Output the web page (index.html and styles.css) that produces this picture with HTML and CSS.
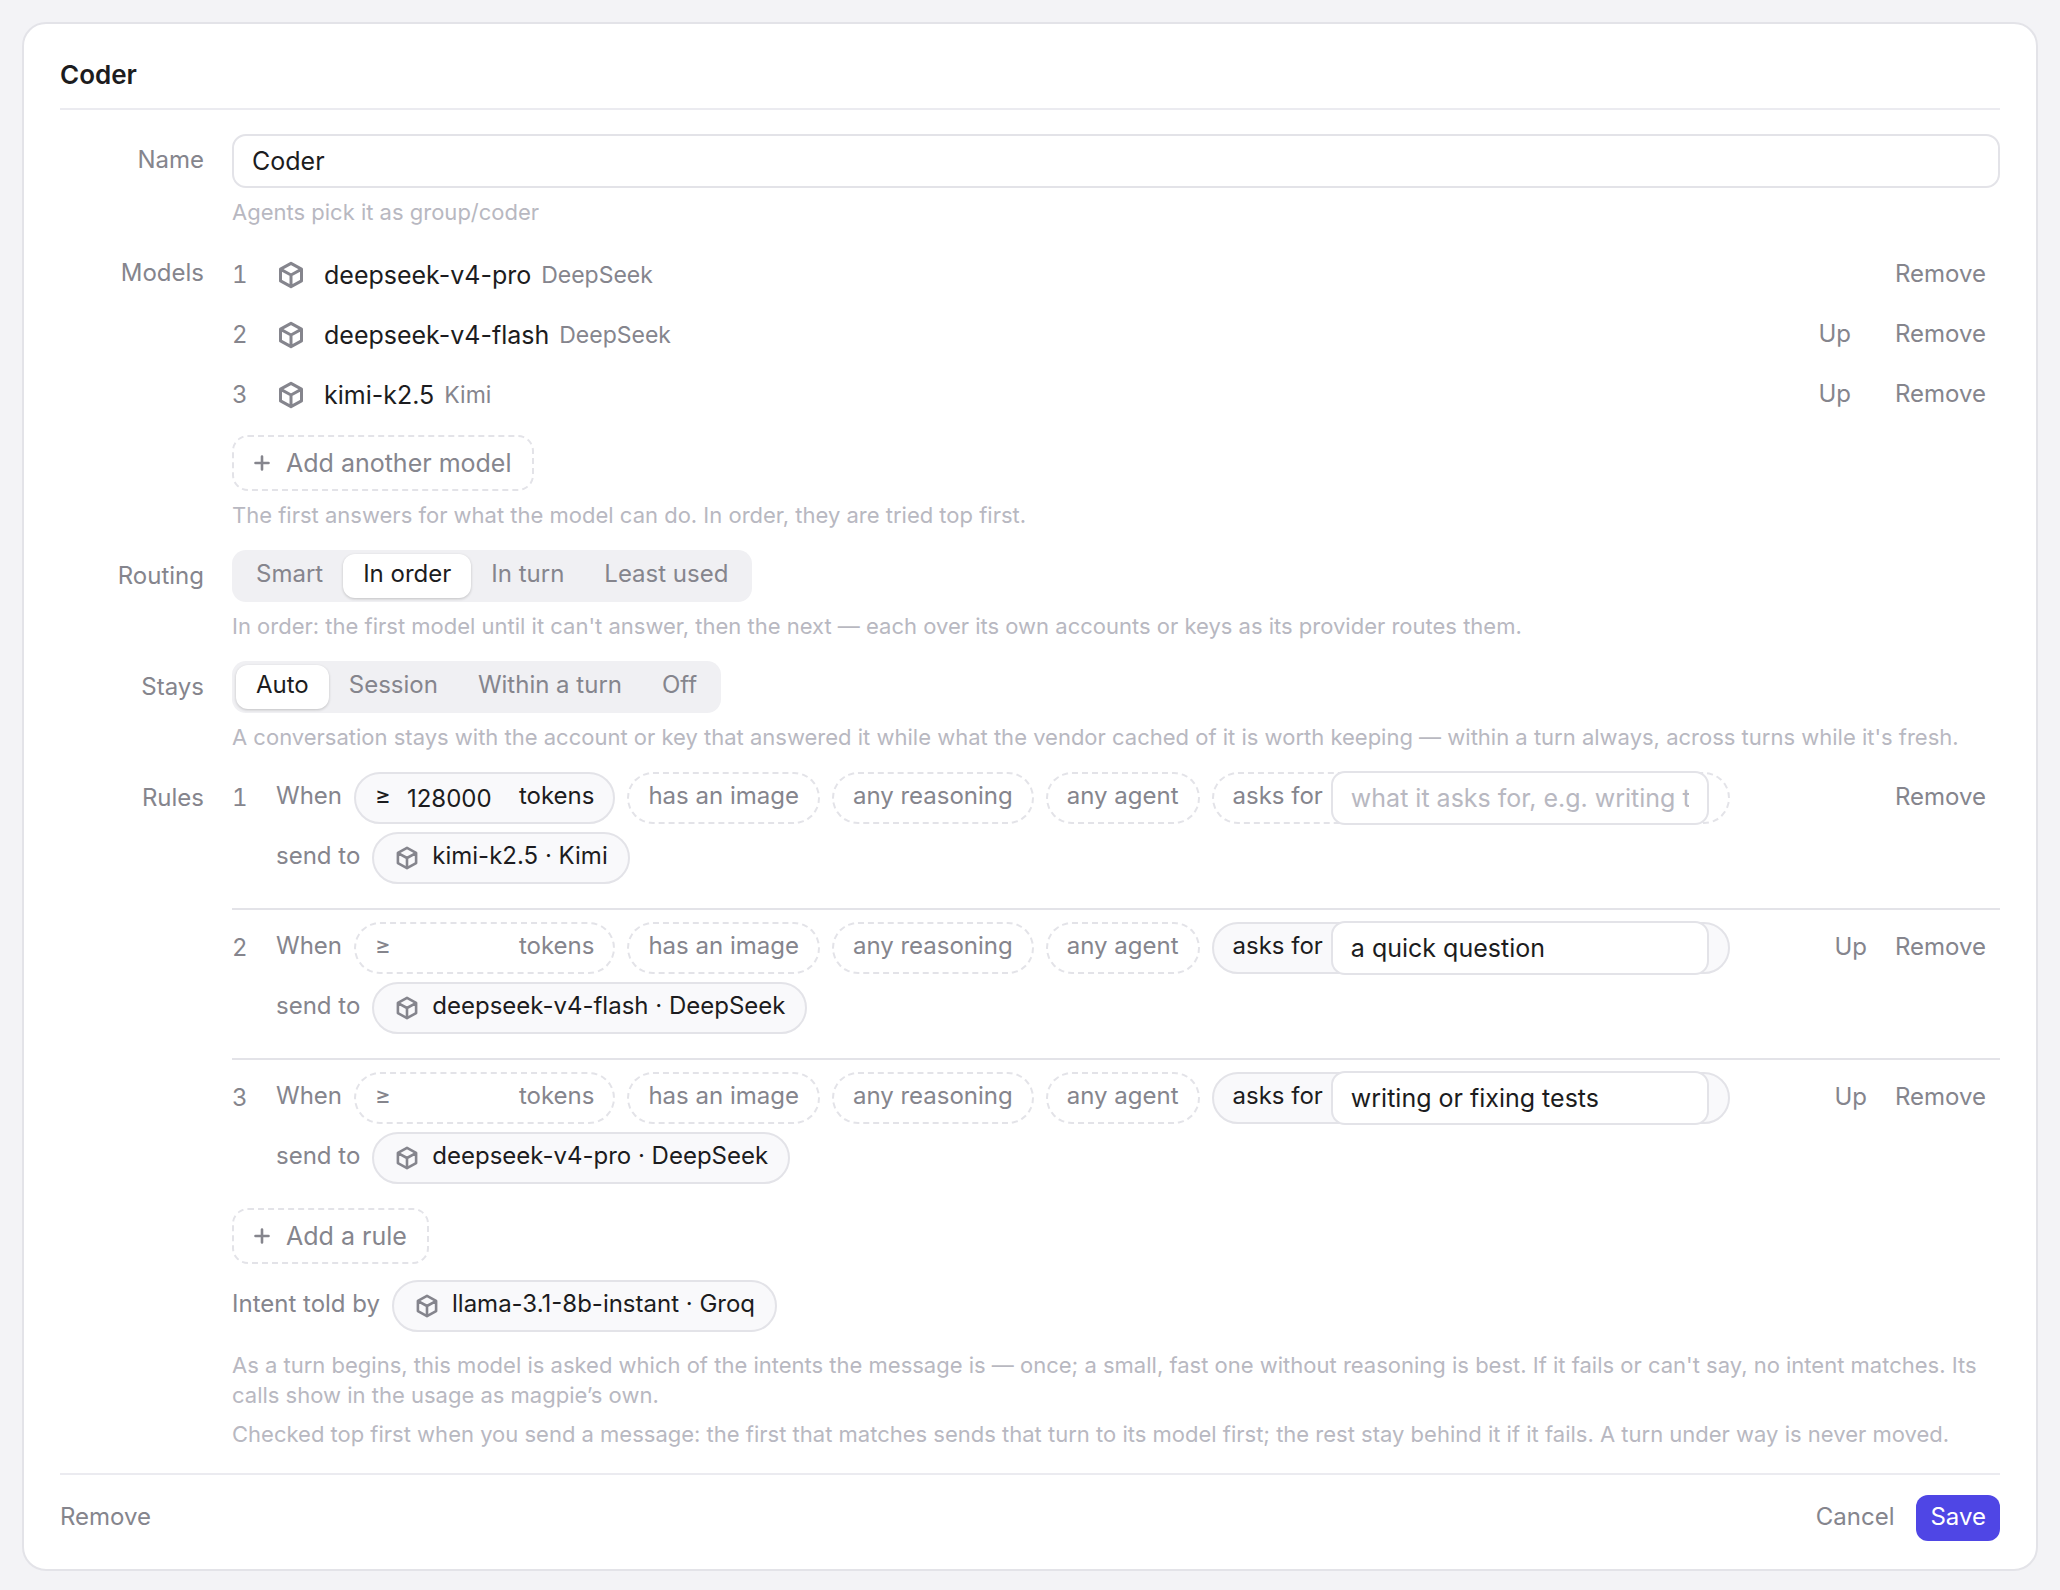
FILE: index.html
```html
<!DOCTYPE html>
<html lang="en">
<head>
  <meta charset="UTF-8" />
  <meta name="viewport" content="width=device-width, initial-scale=1.0"/>
  <title>Coder</title>
  <link rel="stylesheet" href="styles.css">
</head>
<body>
  <!-- shared icons -->
  <svg class="sprite" aria-hidden="true">
    <symbol id="cube" viewBox="0 0 24 24">
      <path d="M12 2.7 20.4 7.3V16.7L12 21.3 3.6 16.7V7.3ZM3.8 7.5 12 12 20.2 7.5M12 12V21.3" fill="none" stroke="currentColor" stroke-width="2.4" stroke-linejoin="round"/>
    </symbol>
    <symbol id="plus" viewBox="0 0 16 16">
      <path d="M8 1.5V14.5M1.5 8H14.5" fill="none" stroke="currentColor" stroke-width="2.6" stroke-linecap="round"/>
    </symbol>
  </svg>

  <form class="card">
    <h1 class="title">Coder</h1>

    <div class="fields">
      <div class="field">
        <label class="label" for="name">Name</label>
        <div class="content">
          <input class="input" type="text" id="name" value="Coder" />
          <p class="hint">Agents pick it as group/coder</p>
        </div>
      </div>

      <div class="field">
        <span class="label">Models</span>
        <div class="content">
          <ol class="models">
            <li class="model">
              <span class="num">1</span>
              <svg class="icon"><use href="#cube"/></svg>
              <span class="model-name">deepseek-v4-pro</span>
              <span class="provider">DeepSeek</span>
              <div class="actions"><button type="button" class="link">Remove</button></div>
            </li>
            <li class="model">
              <span class="num">2</span>
              <svg class="icon"><use href="#cube"/></svg>
              <span class="model-name">deepseek-v4-flash</span>
              <span class="provider">DeepSeek</span>
              <div class="actions"><button type="button" class="link">Up</button><button type="button" class="link">Remove</button></div>
            </li>
            <li class="model">
              <span class="num">3</span>
              <svg class="icon"><use href="#cube"/></svg>
              <span class="model-name">kimi-k2.5</span>
              <span class="provider">Kimi</span>
              <div class="actions"><button type="button" class="link">Up</button><button type="button" class="link">Remove</button></div>
            </li>
          </ol>
          <button type="button" class="add"><svg class="plus"><use href="#plus"/></svg>Add another model</button>
          <p class="hint">The first answers for what the model can do. In order, they are tried top first.</p>
        </div>
      </div>

      <div class="field">
        <span class="label" id="routing">Routing</span>
        <div class="content">
          <div class="segments" role="radiogroup" aria-labelledby="routing">
            <label class="segment"><input type="radio" name="routing"><span>Smart</span></label>
            <label class="segment"><input type="radio" name="routing" checked><span>In order</span></label>
            <label class="segment"><input type="radio" name="routing"><span>In turn</span></label>
            <label class="segment"><input type="radio" name="routing"><span>Least used</span></label>
          </div>
          <p class="hint">In order: the first model until it can't answer, then the next — each over its own accounts or keys as its provider routes them.</p>
        </div>
      </div>

      <div class="field">
        <span class="label" id="stays">Stays</span>
        <div class="content">
          <div class="segments" role="radiogroup" aria-labelledby="stays">
            <label class="segment"><input type="radio" name="stays" checked><span>Auto</span></label>
            <label class="segment"><input type="radio" name="stays"><span>Session</span></label>
            <label class="segment"><input type="radio" name="stays"><span>Within a turn</span></label>
            <label class="segment"><input type="radio" name="stays"><span>Off</span></label>
          </div>
          <p class="hint">A conversation stays with the account or key that answered it while what the vendor cached of it is worth keeping — within a turn always, across turns while it's fresh.</p>
        </div>
      </div>

      <div class="field">
        <span class="label">Rules</span>
        <div class="content">
          <ol class="rules">
            <li class="rule">
              <span class="num">1</span>
              <div class="rule-body">
                <div class="line">
                  <span class="word">When</span>
                  <label class="chip on"><span>≥</span><input class="count" type="text" value="128000"><span>tokens</span></label>
                  <button type="button" class="chip"><span>has an image</span></button>
                  <button type="button" class="chip"><span>any reasoning</span></button>
                  <button type="button" class="chip"><span>any agent</span></button>
                  <label class="chip"><span>asks for</span><input class="input intent" type="text" placeholder="what it asks for, e.g. writing tests"></label>
                </div>
                <div class="line">
                  <span class="word">send to</span>
                  <button type="button" class="chip on target"><svg class="icon-small"><use href="#cube"/></svg><span>kimi-k2.5 · Kimi</span></button>
                </div>
              </div>
              <div class="actions"><button type="button" class="link">Remove</button></div>
            </li>
            <li class="rule">
              <span class="num">2</span>
              <div class="rule-body">
                <div class="line">
                  <span class="word">When</span>
                  <label class="chip"><span>≥</span><input class="count" type="text"><span>tokens</span></label>
                  <button type="button" class="chip"><span>has an image</span></button>
                  <button type="button" class="chip"><span>any reasoning</span></button>
                  <button type="button" class="chip"><span>any agent</span></button>
                  <label class="chip on"><span>asks for</span><input class="input intent" type="text" value="a quick question"></label>
                </div>
                <div class="line">
                  <span class="word">send to</span>
                  <button type="button" class="chip on target"><svg class="icon-small"><use href="#cube"/></svg><span>deepseek-v4-flash · DeepSeek</span></button>
                </div>
              </div>
              <div class="actions"><button type="button" class="link">Up</button><button type="button" class="link">Remove</button></div>
            </li>
            <li class="rule">
              <span class="num">3</span>
              <div class="rule-body">
                <div class="line">
                  <span class="word">When</span>
                  <label class="chip"><span>≥</span><input class="count" type="text"><span>tokens</span></label>
                  <button type="button" class="chip"><span>has an image</span></button>
                  <button type="button" class="chip"><span>any reasoning</span></button>
                  <button type="button" class="chip"><span>any agent</span></button>
                  <label class="chip on"><span>asks for</span><input class="input intent" type="text" value="writing or fixing tests"></label>
                </div>
                <div class="line">
                  <span class="word">send to</span>
                  <button type="button" class="chip on target"><svg class="icon-small"><use href="#cube"/></svg><span>deepseek-v4-pro · DeepSeek</span></button>
                </div>
              </div>
              <div class="actions"><button type="button" class="link">Up</button><button type="button" class="link">Remove</button></div>
            </li>
          </ol>
          <button type="button" class="add"><svg class="plus"><use href="#plus"/></svg>Add a rule</button>
          <div class="line teller">
            <span class="word">Intent told by</span>
            <button type="button" class="chip on target"><svg class="icon-small"><use href="#cube"/></svg><span>llama-3.1-8b-instant · Groq</span></button>
          </div>
          <p class="hint">As a turn begins, this model is asked which of the intents the message is — once; a small, fast one without reasoning is best. If it fails or can't say, no intent matches. Its calls show in the usage as magpie’s own.</p>
          <p class="hint">Checked top first when you send a message: the first that matches sends that turn to its model first; the rest stay behind it if it fails. A turn under way is never moved.</p>
        </div>
      </div>
    </div>

    <div class="footer">
      <button type="button" class="link delete">Remove</button>
      <button type="button" class="link">Cancel</button>
      <button type="submit" class="save">Save</button>
    </div>
  </form>
</body>
</html>
```

FILE: styles.css
```css
* {
  box-sizing: border-box;
}

body {
  margin: 0;
  padding: 22px;
  background: #f3f3f6;
  color: #1c1c20;
  font-family: Inter, sans-serif;
  font-size: 24px;
  line-height: 28px;
}

button,
input {
  font: inherit;
  color: inherit;
}

button {
  border: none;
  background: none;
  cursor: pointer;
}

p,
ol {
  margin: 0;
  padding: 0;
  list-style: none;
}

.sprite {
  display: none;
}

.card {
  padding: 36px 36px 28px;
  background: #ffffff;
  border: 2px solid #e3e3e8;
  border-radius: 24px;
}

.title {
  margin: 0;
  padding-bottom: 18px;
  border-bottom: 2px solid #ebebf0;
  font-size: 26px;
  line-height: 30px;
  font-weight: 600;
}

.fields {
  display: flex;
  flex-direction: column;
  gap: 20px;
  padding: 24px 0;
}

.field {
  display: grid;
  grid-template-columns: 144px 1fr;
  gap: 28px;
}

.label {
  padding-top: 12px;
  text-align: right;
  color: #85858d;
}

.content {
  min-width: 0;
}

.input {
  display: block;
  width: 100%;
  height: 54px;
  padding: 0 18px;
  background: #ffffff;
  border: 2px solid #e3e3e8;
  border-radius: 14px;
  font-size: 25px;
  color: #1c1c20;
}

.input::placeholder {
  color: #b8b8c1;
}

.hint {
  margin-top: 9px;
  font-size: 22px;
  line-height: 30px;
  color: #b8b8c1;
}

/* models */
.models {
  display: flex;
  flex-direction: column;
  gap: 4px;
  margin-bottom: 12px;
}

.model {
  display: flex;
  align-items: center;
  height: 56px;
}

.num {
  width: 44px;
  color: #85858d;
  font-variant-numeric: tabular-nums;
}

.icon {
  width: 30px;
  height: 30px;
  margin-right: 18px;
  color: #85858d;
}

.model-name {
  margin-right: 10px;
  font-size: 25px;
}

.provider {
  font-size: 23px;
  color: #85858d;
}

.actions {
  display: flex;
  margin-left: auto;
}

.model .actions {
  gap: 16px;
}

.link {
  padding: 0 14px 2px;
  color: #85858d;
}

.add {
  display: flex;
  align-items: center;
  gap: 16px;
  height: 56px;
  padding: 0 20px;
  border: 2px dashed #e3e3e8;
  border-radius: 16px;
  font-size: 25px;
  color: #85858d;
}

.plus {
  width: 16px;
  height: 16px;
}

/* segmented control */
.segments {
  display: inline-flex;
  vertical-align: top;
  padding: 4px;
  background: #f0f0f3;
  border-radius: 14px;
}

.segment {
  position: relative;
  color: #85858d;
  cursor: pointer;
}

.segment input {
  position: absolute;
  margin: 0;
  opacity: 0;
}

.segment span {
  display: block;
  padding: 6px 20px 10px;
  border-radius: 12px;
}

.segment input:checked + span {
  background: #ffffff;
  color: #1c1c20;
  box-shadow: 0 1px 3px rgba(0, 0, 0, 0.2);
}

/* rules */
.rule {
  display: flex;
  padding: 12px 0 24px;
  border-bottom: 2px solid #e3e3e8;
}

.rule:first-child {
  padding-top: 0;
}

.rule:last-child {
  border-bottom: none;
}

.rule .num,
.rule .actions {
  height: 52px;
  align-items: center;
  line-height: 52px;
}

.rule-body {
  display: flex;
  flex-direction: column;
  gap: 8px;
}

.line {
  display: flex;
  align-items: center;
  gap: 12px;
}

.word {
  padding-bottom: 4px;
  color: #85858d;
}

.chip {
  display: flex;
  align-items: center;
  gap: 8px;
  height: 52px;
  padding: 0 19px;
  border: 2px dashed #e3e3e8;
  border-radius: 26px;
  color: #85858d;
  white-space: nowrap;
}

.chip span {
  padding-bottom: 4px;
}

.chip.on {
  background: #f9f9fb;
  border-style: solid;
  color: #1c1c20;
}

.chip.target {
  gap: 12px;
  padding: 0 20px;
}

.count {
  width: 112px;
  height: 44px;
  padding: 0 8px;
  border: none;
  background: none;
}

.intent {
  width: 378px;
}

.icon-small {
  width: 26px;
  height: 26px;
  color: #85858d;
}

.teller {
  margin: 16px 0 18px;
}

/* footer */
.footer {
  display: flex;
  align-items: center;
  gap: 8px;
  padding-top: 20px;
  border-top: 2px solid #ebebf0;
}

.delete {
  margin-right: auto;
  padding-left: 0;
}

.save {
  height: 46px;
  padding: 0 14px 2px;
  background: #4f46e5;
  border-radius: 12px;
  color: #ffffff;
}
```
